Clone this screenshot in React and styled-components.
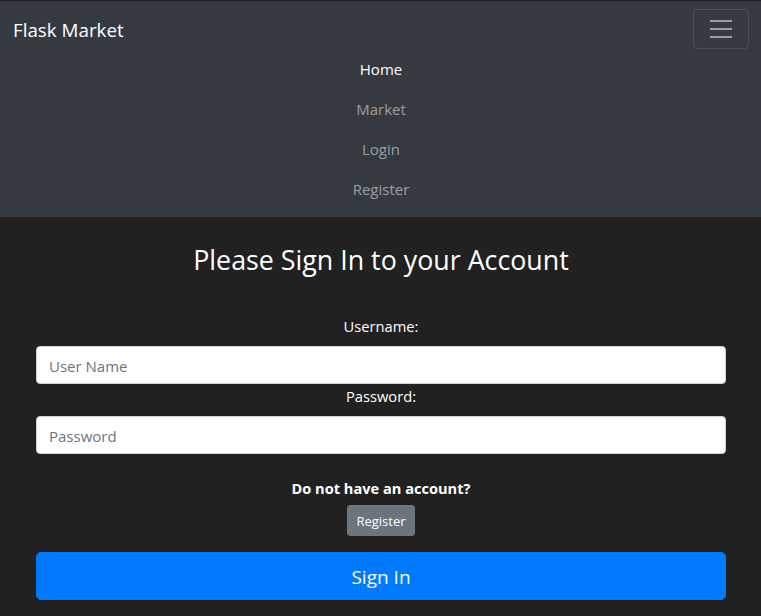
import styled, { createGlobalStyle } from 'styled-components';

const Global = createGlobalStyle`
    html, body {
        margin: 0;
        padding: 0;
        background: #212121;
    }
    body {
        padding-top: 1px;
        font-family: "Open Sans", "Noto Sans", sans-serif;
        font-size: 16px;
        line-height: 1.5;
        color: #fff;
    }
    * { box-sizing: border-box; }
`;

const Navbar = styled.nav`
    background: #343a40;
    padding: 8px 12px 8px 13px;
`;

const TopRow = styled.div`
    display: flex;
    align-items: center;
    justify-content: space-between;
    height: 40px;
`;

const Brand = styled.a`
    font-size: 18.8px;
    color: #fff;
    line-height: 30px;
    padding-top: 2px;
    text-decoration: none;
`;

const Toggler = styled.button`
    width: 56px;
    height: 40px;
    border: 1px solid rgba(255, 255, 255, 0.1);
    border-radius: 4px;
    background: transparent;
    display: flex;
    align-items: center;
    justify-content: center;
    padding: 0;
`;

const NavList = styled.ul`
    list-style: none;
    margin: 0;
    padding: 0;
    display: flex;
    flex-direction: column;
    align-items: center;
`;

const NavLink = styled.a`
    display: block;
    padding: 8px 0;
    line-height: 24px;
    font-size: 15px;
    text-decoration: none;
    color: ${p => (p.$active ? '#fff' : 'rgba(255,255,255,0.5)')};
`;

const Container = styled.div`
    padding: 0 35px 0 36px;
    text-align: center;
`;

const Heading = styled.h2`
    font-size: 26.8px;
    font-weight: 400;
    line-height: 38px;
    margin: 24px 0 35px;
`;

const Label = styled.label`
    display: block;
    font-size: 14.7px;
    line-height: 24px;
    margin-bottom: ${p => p.$mb || 0}px;
`;

const Input = styled.input`
    display: block;
    width: 100%;
    height: 38px;
    padding: 7px 12px 5px;
    font-family: inherit;
    font-size: 15px;
    border: 1px solid #ced4da;
    border-radius: 4px;
    background: #fff;
    color: #495057;
    &::placeholder { color: #6c757d; }
`;

const Question = styled.p`
    font-weight: 700;
    font-size: 14.6px;
    line-height: 24px;
    margin: 22px 0 5px;
`;

const SmallButton = styled.button`
    font-family: inherit;
    font-size: 13px;
    line-height: 21px;
    padding: 5px 8px 3px;
    border: 1px solid #6c757d;
    border-radius: 3px;
    background: #6c757d;
    color: #fff;
`;

const BigButton = styled.button`
    display: block;
    width: 100%;
    height: 48px;
    margin-top: 16px;
    padding-top: 3px;
    font-family: inherit;
    font-size: 19px;
    border: 1px solid #007bff;
    border-radius: 5px;
    background: #007bff;
    color: #fff;
`;

const Burger = () => (
    <svg width="30" height="30" viewBox="0 0 30 30">
        <path stroke="rgba(255,255,255,0.5)" strokeWidth="2" strokeLinecap="butt" d="M4 7h22M4 15h22M4 23h22" />
    </svg>
);

export default function App() {
    return (
        <>
            <Global />
            <Navbar>
                <TopRow>
                    <Brand href="#">Flask Market</Brand>
                    <Toggler><Burger /></Toggler>
                </TopRow>
                <NavList>
                    <li><NavLink $active href="#">Home</NavLink></li>
                    <li><NavLink href="#">Market</NavLink></li>
                    <li><NavLink href="#">Login</NavLink></li>
                    <li><NavLink href="#">Register</NavLink></li>
                </NavList>
            </Navbar>
            <Container>
                <Heading>Please Sign In to your Account</Heading>
                <Label $mb={8}>Username:</Label>
                <Input placeholder="User Name" />
                <Label $mb={8}>Password:</Label>
                <Input type="password" placeholder="Password" />
                <Question>Do not have an account?</Question>
                <SmallButton>Register</SmallButton>
                <BigButton>Sign In</BigButton>
            </Container>
        </>
    );
}
